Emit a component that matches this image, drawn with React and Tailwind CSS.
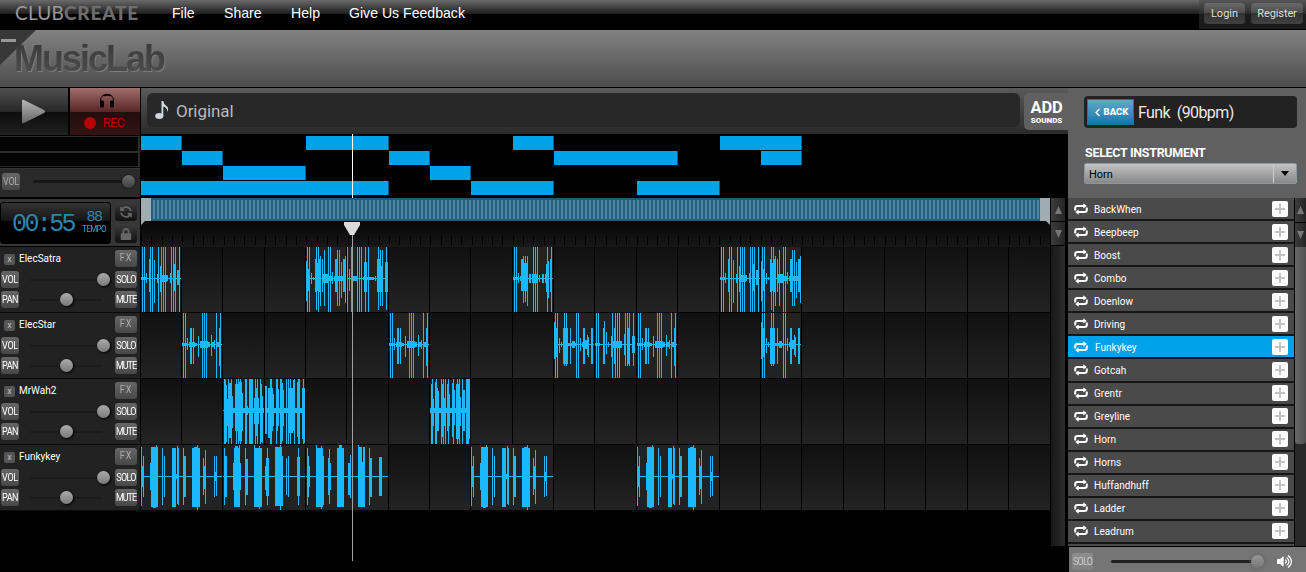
import React, { useState } from 'react';
import { FaLock, FaSyncAlt, FaVolumeUp, FaChevronLeft } from 'react-icons/fa';

// Full height bars, one pixel wide each
const full = (...xs) => xs.map((x) => [x, 1, 31, 33]);

// Each bar is [x, width, height above the axis, height below the axis]
const waves = {
  a: [...full(1, 3, 9, 11, 17, 20, 22, 24, 30, 32, 34, 38), [0, 5, 1, 1], [5, 1, 5, 4], [8, 2, 19, 13], [13, 1, 18, 24], [16, 2, 4, 4], [19, 1, 12, 13], [21, 5, 3, 3], [26, 1, 3, 2], [29, 1, 5, 4], [32, 3, 14, 12], [36, 2, 8, 6]],
  b: [...full(1, 3, 12, 22, 24), [0, 1, 17, 22], [2, 1, 9, 12], [5, 1, 5, 5], [7, 1, 1, 1], [9, 6, 15, 12], [9, 2, 19, 13], [10, 1, 31, 31], [12, 3, 19, 13], [14, 1, 22, 27], [16, 1, 19, 13], [17, 5, 4, 4], [18, 1, 28, 27], [21, 5, 2, 2], [26, 1, 6, 5], [28, 9, 2, 2], [29, 3, 19, 13], [31, 1, 28, 27], [33, 1, 28, 27], [35, 1, 16, 19], [37, 3, 19, 13], [39, 1, 22, 24]],
  c: [...full(0, 4, 10, 12, 14, 18, 21), [2, 1, 9, 12], [4, 6, 2, 2], [17, 3, 16, 13], [16, 11, 1, 1], [28, 1, 2, 2], [30, 3, 19, 13], [31, 1, 31, 31], [33, 1, 28, 27], [30, 6, 12, 13], [35, 1, 28, 27], [38, 3, 16, 13], [39, 1, 31, 31]],
  d: [...full(1, 3, 20, 22, 24, 34, 38), [0, 5, 1, 1], [5, 1, 5, 4], [7, 2, 2, 2], [8, 2, 19, 12], [8, 7, 15, 12], [10, 1, 22, 24], [12, 1, 22, 23], [14, 1, 22, 27], [16, 2, 4, 4], [19, 6, 4, 4], [26, 1, 3, 3], [29, 2, 4, 4], [32, 3, 4, 4], [33, 2, 14, 13], [35, 1, 17, 19], [37, 1, 19, 13]],
  e: [...full(1, 3, 20, 22, 24, 34, 38), [0, 5, 1, 1], [5, 1, 6, 5], [7, 6, 2, 2], [8, 2, 16, 19], [11, 1, 16, 19], [13, 2, 1, 1], [16, 1, 8, 12], [18, 8, 3, 3], [26, 2, 2, 2], [29, 1, 9, 11], [30, 2, 2, 2], [32, 1, 4, 4], [35, 4, 2, 2], [37, 1, 16, 21]],
  f: [...full(1, 3, 22, 24), [0, 4, 16, 12], [0, 1, 22, 14], [5, 1, 6, 8], [7, 1, 2, 2], [9, 5, 16, 19], [10, 1, 31, 21], [12, 1, 31, 21], [14, 8, 1, 1], [16, 1, 16, 19], [18, 3, 3, 3], [26, 1, 6, 6], [28, 7, 2, 2], [29, 2, 16, 19], [31, 2, 4, 4], [33, 1, 9, 10], [34, 1, 7, 12], [37, 2, 16, 19], [40, 1, 16, 19]],
  g: [...full(1, 3, 17, 20, 22, 24), [0, 5, 1, 1], [8, 1, 16, 19], [9, 1, 23, 19], [11, 1, 12, 9], [13, 1, 2, 2], [16, 2, 8, 12], [19, 1, 16, 19], [17, 10, 3, 3], [29, 1, 10, 10], [30, 1, 31, 21], [32, 1, 31, 21], [32, 3, 16, 19], [34, 1, 31, 21], [37, 2, 2, 2], [38, 1, 31, 21], [37, 3, 8, 8]],
  h: [...full(1, 2, 5, 8, 13, 15, 17, 22, 23, 26, 27, 28, 29, 32, 34, 37), [1, 40, 2, 2], [3, 1, 25, 31], [4, 1, 11, 15], [5, 4, 27, 27], [8, 1, 27, 27], [9, 1, 14, 17], [12, 3, 26, 20], [15, 4, 28, 30], [19, 1, 17, 20], [24, 1, 4, 4], [31, 1, 12, 13], [33, 1, 22, 25], [35, 1, 12, 13], [37, 2, 26, 31], [39, 1, 14, 32]],
  i: [...full(5, 6, 11, 15, 16, 21, 23, 25, 29, 33, 34, 38), [0, 40, 2, 2], [0, 2, 24, 23], [3, 3, 22, 27], [7, 1, 22, 20], [8, 1, 16, 15], [11, 2, 31, 20], [13, 1, 21, 15], [15, 3, 27, 30], [18, 1, 20, 15], [24, 4, 22, 22], [28, 2, 30, 20], [32, 3, 28, 26], [37, 3, 22, 28], [39, 1, 16, 32]],
  k: [...full(2, 6, 11, 13, 15, 18, 23, 27, 29, 32, 36, 37, 38), [0, 40, 2, 2], [1, 2, 26, 33], [3, 1, 11, 15], [5, 2, 28, 33], [7, 1, 22, 20], [8, 1, 19, 20], [12, 1, 26, 26], [14, 1, 12, 15], [17, 2, 26, 20], [19, 1, 16, 15], [22, 2, 27, 26], [24, 1, 20, 14], [26, 4, 26, 28], [30, 1, 13, 15], [33, 2, 20, 20], [36, 5, 31, 28]],
  j1: [[0, 82, 0, 0], [0, 1, 29, 29], [1, 1, 10, 10], [2, 1, 20, 20], [9, 1, 13, 13], [10, 7, 29, 30], [12, 3, 28, 31], [15, 1, 32, 30], [21, 1, 28, 28], [23, 1, 20, 20], [31, 4, 28, 30], [34, 3, 2, 2], [36, 1, 30, 27], [37, 1, 28, 28], [42, 1, 28, 28], [43, 2, 20, 20], [51, 8, 28, 30], [53, 3, 29, 28], [56, 1, 31, 33], [62, 1, 18, 18], [63, 1, 10, 12], [64, 1, 26, 27], [73, 1, 20, 20], [74, 1, 4, 4], [75, 1, 20, 19]],
  j2: [[0, 82, 0, 0], [1, 1, 28, 28], [2, 2, 20, 20], [10, 8, 13, 13], [11, 6, 28, 30], [12, 3, 30, 30], [16, 1, 32, 28], [22, 1, 28, 28], [23, 2, 17, 18], [31, 8, 28, 30], [31, 1, 32, 30], [36, 1, 30, 32], [42, 4, 10, 13], [43, 3, 18, 19], [44, 1, 28, 28], [52, 7, 29, 29], [52, 8, 20, 29], [57, 1, 31, 33], [63, 1, 18, 18], [65, 1, 20, 20], [74, 3, 19, 19], [75, 1, 28, 28]],
  j3: [[0, 82, 0, 0], [1, 1, 28, 28], [2, 1, 20, 20], [3, 1, 10, 10], [10, 8, 20, 28], [10, 7, 28, 30], [10, 1, 32, 30], [15, 1, 30, 32], [22, 1, 18, 18], [23, 1, 27, 27], [24, 1, 13, 13], [31, 7, 28, 30], [33, 3, 31, 30], [42, 2, 13, 18], [44, 1, 21, 21], [52, 4, 29, 30], [52, 1, 32, 30], [56, 3, 14, 30], [57, 2, 29, 28], [63, 1, 28, 28], [64, 2, 18, 20], [73, 3, 19, 19]],
};

// Clips by start column
const tracks = [
  { name: 'ElecSatra', clips: { 0: 'a', 4: 'b', 5: 'c', 9: 'd', 14: 'a', 15: 'b' } },
  { name: 'ElecStar', clips: { 1: 'e', 6: 'e', 10: 'f', 11: 'g', 12: 'e', 15: 'f' } },
  { name: 'MrWah2', clips: { 2: 'h', 3: 'i', 7: 'k' } },
  { name: 'Funkykey', span: 2, clips: { 0: 'j1', 2: 'j2', 4: 'j3', 8: 'j1', 12: 'j1' } },
];

// Overview bars as [start column, length]
const overview = [
  [[0, 1], [4, 2], [9, 1], [14, 2]],
  [[1, 1], [6, 1], [10, 3], [15, 1]],
  [[2, 2], [7, 1]],
  [[0, 6], [8, 2], [12, 2]],
];

const sounds = [
  'BackWhen', 'Beepbeep', 'Boost', 'Combo', 'Doenlow', 'Driving', 'Funkykey', 'Gotcah',
  'Grentr', 'Greyline', 'Horn', 'Horns', 'Huffandhuff', 'Ladder', 'Leadrum',
];

const Wave = ({ name, width }) => (
  <svg width={width} height="65" className="block" shapeRendering="crispEdges" fill="#1cb8fc">
    <rect x="0" y="31" width={width - 1} height="1" />
    {waves[name].map(([x, w, up, down], i) => (
      <rect key={i} x={x} y={31 - up} width={w} height={up + down + 1} />
    ))}
  </svg>
);

const LoopIcon = () => (
  <svg width="14" height="12" viewBox="0 0 14 12" fill="none" stroke="#fff" strokeWidth="2">
    <path d="M1.2 7.5V5.2Q1.2 3 3.4 3H10" />
    <path d="M12.8 4.5V6.8Q12.8 9 10.6 9H4" />
    <path d="M9.3 .2L12.8 3L9.3 5.6ZM4.7 6.4L1.2 9L4.7 11.8Z" fill="#fff" stroke="none" />
  </svg>
);

const HeadphonesIcon = () => (
  <svg width="16" height="15" viewBox="0 0 16 15">
    <path d="M2 9C.5 4 4 1.500 8 1.500s7.500 2.500 6 7.500" fill="none" stroke="#000" strokeWidth="1" />
    <path d="M4 2.300Q8-1 12 2.300L11.300 3.600Q8 1.800 4.700 3.600Z" />
    <rect x="1" y="7.500" width="4" height="7" rx="1.500" />
    <rect x="11" y="7.500" width="4" height="7" rx="1.500" />
  </svg>
);

const PixelButton = ({ children, className = '' }) => (
  <button className={`flex h-[17px] items-center justify-center rounded-[3px] bg-linear-to-b from-[#666] to-[#484848] text-[9px] leading-none text-white ${className}`}>
    <span className="inline-block scale-y-115 pt-px">{children}</span>
  </button>
);

const Slider = ({ position }) => (
  <div className="relative h-[2px] w-[72px] bg-[#1b1b1b]">
    <div
      className="absolute -top-[6px] size-[13px] rounded-full bg-linear-to-b from-[#ababab] to-[#7a7a7a] shadow-[1px_1px_3px_#000]"
      style={{ left: position }}
    />
  </div>
);

const TrackControls = ({ name }) => (
  <div className="h-[66px] border-b border-[#0b0b0b] bg-[#222] pt-[2px]">
    <div className="flex h-[18px] items-center pl-1 pr-[3px]">
      <span className="mt-[2px] flex size-[11px] items-center justify-center rounded-[2px] bg-[#555] text-[9px] leading-none text-[#bbb]">x</span>
      <span className="ml-[4px] flex-1 pt-[2px] text-[10px] leading-none text-white">{name}</span>
      <PixelButton className="w-[22px] tracking-[1px] !text-[#aaa]">FX</PixelButton>
    </div>
    <div className="mt-1 flex items-center pl-px pr-[3px]">
      <PixelButton className="w-[18px]"><span className="tracking-[-.3px]">VOL</span></PixelButton>
      <div className="ml-[11px] flex-1"><Slider position={67} /></div>
      <PixelButton className="w-[22px]"><span className="tracking-[-.7px]">SOLO</span></PixelButton>
    </div>
    <div className="mt-[3px] flex items-center pl-px pr-[3px]">
      <PixelButton className="w-[18px]"><span className="tracking-[-.5px]">PAN</span></PixelButton>
      <div className="ml-[11px] flex-1"><Slider position={30} /></div>
      <PixelButton className="w-[22px]"><span className="tracking-[-1px]">MUTE</span></PixelButton>
    </div>
  </div>
);

const TrackLane = ({ clips, span = 1 }) => {
  const cells = [];
  for (let col = 0; col < 22; col += clips[col] ? span : 1) {
    const clip = clips[col];
    cells.push(
      <div
        key={col}
        className={`border-l border-black ${clip && span === 2 ? 'col-span-2' : ''} ${clip ? 'bg-[#222]' : 'bg-linear-to-b from-[#111] to-[#232323]'}`}
      >
        {clip && <Wave name={clip} width={span === 2 ? 82 : 41} />}
      </div>
    );
  }
  return (
    <div className="ml-[-0.3px] grid h-[66px] grid-cols-[repeat(21,41.350px)_1fr] overflow-hidden border-b border-[#050505]">
      {cells}
    </div>
  );
};

const ArrowBox = ({ up, className = '' }) => (
  <div className={`flex items-center justify-center bg-linear-to-r from-[#3c3c3c] to-[#252525] ${className}`}>
    <svg width="7" height="8" viewBox="0 0 7 8" fill="#777">
      <path d={up ? 'M3.5 0L7 8H0Z' : 'M0 0H7L3.500 8Z'} />
    </svg>
  </div>
);

const Header = () => (
  <>
    <div className="flex h-[30px] bg-[linear-gradient(#6a6a6a_0,#1c1c1c_14px,#000_14px)]">
      <div className="w-[172px] whitespace-nowrap pl-[15px] pt-[3px] font-['Lato'] text-[19px] leading-[20px] text-[#999]">
        <span className="tracking-[.2px]">CLUB</span>
        <span className="font-black tracking-[.8px] text-[#6e6e6e]">CREATE</span>
      </div>
      <nav className="flex flex-1 font-['Liberation_Sans'] text-[14.100px] leading-[27px] text-white">
        <span className="w-[52px]">File</span>
        <span className="w-[67px]">Share</span>
        <span className="w-[58px]">Help</span>
        <span>Give Us Feedback</span>
      </nav>
      <div className="flex h-[29px] w-[107px] gap-[6px] bg-[linear-gradient(#555_0,#2a2a2a_14px,#1b1b1b_14px)] pl-[5px] pt-[3px] text-[11px] text-[#ddd]">
        <button className="h-[21px] w-[41px] rounded-[4px] bg-[linear-gradient(#6b6b6b,#4b4b4b_50%,#333_50%,#414141)] pt-px">Login</button>
        <button className="h-[21px] w-[52px] rounded-[4px] bg-[linear-gradient(#6b6b6b,#4b4b4b_50%,#333_50%,#414141)] pt-px tracking-[-.1px]">Register</button>
      </div>
    </div>
    <div className="relative h-[58px] border-b border-black bg-linear-to-b from-[#828282] to-[#4d4d4d]">
      <svg className="absolute left-0 top-0" width="37" height="35">
        <path d="M0 0H36L0 35Z" fill="#383838" />
        <rect x="1" y="9" width="15" height="3" fill="#999" />
      </svg>
      <h1 className="absolute left-[14px] top-[9px] pr-1 bg-linear-to-b from-[#383838] to-[#505050] bg-clip-text font-['Liberation_Sans'] text-[36px] font-bold leading-[40px] tracking-[-2px] text-transparent drop-shadow-[1px_1px_0_#7b7b7b]">
        MusicLab
      </h1>
    </div>
  </>
);

const LeftPanel = () => (
  <aside className="w-[140px] bg-black">
    <div className="flex h-[47px] gap-[2px]">
      <button className="flex w-[68px] items-center justify-center bg-[linear-gradient(#505050,#272727_50%,#0c0c0c_50%,#202020)]">
        <svg width="26" height="26" viewBox="0 0 26 26">
          <defs>
            <linearGradient id="play" x2="0" y2="1">
              <stop stopColor="#b5b5b5" />
              <stop offset="1" stopColor="#666" />
            </linearGradient>
          </defs>
          <path d="M1 2Q1 0 3 1L23 11Q25 12.500 23 14L3 24Q1 25 1 23Z" fill="url(#play)" />
        </svg>
      </button>
      <button className="flex flex-1 flex-col items-center bg-[linear-gradient(#a16e6e,#5a2626_50%,#220c0c_50%,#351313)] pt-[5px]">
        <span className="ml-1"><HeadphonesIcon /></span>
        <span className="mt-[8px] flex items-center gap-[7px] pr-[2px] text-[13px] leading-[14px] text-[#b80000]">
          <span className="size-[12px] rounded-full bg-[#b50505]" />
          <span className="tracking-[-.8px]">REC</span>
        </span>
      </button>
    </div>
    <div className="mt-px flex h-[31px] flex-col gap-[2px] border-r-2 border-[#2c2c2c] bg-[#2c2c2c] pt-px">
      <div className="h-[14px] bg-[#050505]" />
      <div className="h-[13px] bg-[#050505]" />
    </div>
    <div className="mt-px flex h-[29px] items-center border-t border-[#333] bg-[#2a2a2a] pl-[2px]">
      <PixelButton className="-mt-[3px] w-[18px] !text-[#aaa]"><span className="tracking-[-.3px]">VOL</span></PixelButton>
      <div className="relative -mt-[4px] ml-[13px] h-[3px] w-[96px] rounded bg-[#171717]">
        <div className="absolute -top-[5px] left-[89px] size-[13px] rounded-full bg-linear-to-b from-[#6e6e6e] to-[#404040] shadow-[0_0_2px_#000]" />
      </div>
    </div>
    <div className="mt-[2px] flex h-[47px] gap-[4px] bg-[#363636] pr-[3px] pt-[3px]">
      <div className="flex h-[42px] w-[111px] rounded-[3px] border border-black bg-[linear-gradient(#333,#151515_18px,#000_18px)] text-[#2b86ae]">
        <div className="w-[81px] whitespace-nowrap pl-[11px] pt-[12px] font-['Liberation_Mono'] text-[25px] leading-[20px] tracking-[-2.600px]">00:55</div>
        <div className="w-[24px] pt-[9px] text-center">
          <div className="font-['Liberation_Mono'] text-[15px] leading-[12px] tracking-[-1.500px]">88</div>
          <div className="mt-[2px] scale-y-115 text-[8px] leading-[8px] tracking-[-.6px] text-[#3fa5d0]">TEMPO</div>
        </div>
      </div>
      <div className="flex flex-col gap-[3px] text-[#666]">
        <div className="flex h-[19px] w-[22px] items-center justify-center rounded-[3px] bg-linear-to-b from-[#3c3c3c] to-[#111]"><FaSyncAlt size={12} className="-scale-x-100" /></div>
        <div className="flex h-[19px] w-[22px] items-center justify-center rounded-[3px] bg-linear-to-b from-[#3c3c3c] to-[#111]"><FaLock size={12} /></div>
      </div>
    </div>
    <div className="pt-px">
      {tracks.map((track) => <TrackControls key={track.name} name={track.name} />)}
    </div>
  </aside>
);

const Timeline = () => (
  <main className="relative w-[929px] bg-black">
    <div className="ml-px flex h-[46px] bg-linear-to-b from-[#5a5a5a] to-[#2a2a2a] pl-[6px] pt-[5px]">
      <div className="flex h-[34px] w-[873px] items-center rounded-[6px] bg-[#282828] pl-[8px] text-[17px] tracking-[-.05px] text-[#b9b9b9]">
        <svg className="mr-[7px]" width="14" height="20" viewBox="0 0 14 20" fill="#ced8df">
          <ellipse cx="4.300" cy="16" rx="4.100" ry="2.900" />
          <path d="M6.500 1H8.300Q8.800 4.500 11.500 6T12.500 12Q12.300 7.500 8.300 6.500V16H6.500Z" />
        </svg>
        <span className="pt-[3px]">Original</span>
      </div>
      <button className="ml-[4px] h-[37px] w-[45px] self-start rounded-l-[5px] bg-[#606060] text-center font-bold text-white">
        <span className="block text-[16.500px] leading-[18px] tracking-[-.2px]">ADD</span>
        <span className="block text-[8px] leading-[7px] font-black">SOUNDS</span>
      </button>
    </div>
    <div className="mt-[2px] flex h-[62px] flex-col gap-px">
      {overview.map((bars, row) => (
        <div key={row} className="ml-[-0.3px] grid h-[14px] grid-cols-[repeat(22,41.350px)]">
          {bars.map(([start, length]) => (
            <div
              key={start}
              className="row-start-1 ml-px -mr-px border-r border-[#005f8c] bg-[#00a2ea]"
              style={{ gridColumn: `${start + 1} / span ${length}` }}
            />
          ))}
        </div>
      ))}
    </div>
    <div className="flex">
      <div className="w-[910px]">
        <div className="ml-px flex h-[23px] bg-[#1d5d79]">
          <div className="w-[10px] bg-[#9fadb3]" />
          <div className="my-[2px] flex-1 bg-[repeating-linear-gradient(90deg,#245f79_0,#245f79_2px,#4b87a2_2px,#4b87a2_4px)]" />
          <div className="w-[10px] bg-[#9fadb3]" />
        </div>
        <div className="relative ml-px flex h-[26px] items-end overflow-hidden bg-linear-to-b from-[#070707] to-[#181818] pb-[2px]">
          {Array.from({ length: 89 }, (_, i) => (
            <div key={i} className="h-[9px] w-[10.333px] shrink-0 border-l border-black" />
          ))}
          <svg className="absolute left-0 top-0" width="4" height="4" fill="#9fadb3"><path d="M0 0H4L0 4Z" /></svg>
          <svg className="absolute right-0 top-0" width="4" height="4" fill="#9fadb3"><path d="M0 0H4V4Z" /></svg>
        </div>
        {tracks.map((track) => <TrackLane key={track.name} clips={track.clips} span={track.span} />)}
      </div>
      <div className="ml-px flex h-[348px] w-[14px] flex-col bg-linear-to-r from-[#181818] to-[#2d2d2d]">
        <ArrowBox up className="h-[24px] border-b border-black" />
        <ArrowBox className="h-[24px] border-b border-black" />
      </div>
    </div>
    <div className="absolute left-[212px] top-[46px] h-[64px] w-px bg-white" />
    <div className="absolute left-[212px] top-[147px] h-[326px] w-px bg-[#a0a0a0]" />
    <svg className="absolute left-[204px] top-[134px]" width="17" height="14">
      <path d="M0 0H16V3L10 13H6L0 3Z" fill="#dcdcdc" />
    </svg>
  </main>
);

const SoundLibrary = () => {
  const [selected, setSelected] = useState('Funkykey');

  return (
    <aside className="flex w-[237px] flex-col bg-black">
      <div className="relative -ml-px h-[110px] bg-[#606060] pl-[16px] pt-[8px]">
        <div className="flex h-[32px] w-[213px] items-center rounded-[4px] bg-[#222] pl-[3px]">
          <button className="flex h-[26px] w-[47px] items-center justify-center gap-[2px] border border-[#1676a1] bg-linear-to-b from-[#61a8c9] to-[#0878ab] pt-px text-[9.500px] font-black text-white">
            <FaChevronLeft size={9} />
            BACK
          </button>
          <span className="ml-[4px] whitespace-pre pt-[2px] text-[16px] tracking-[-.6px] text-[#e8e8e8]">Funk  (90bpm)</span>
        </div>
        <div className="mt-[18px] pl-px text-[12.500px] font-bold leading-[14px] text-white tracking-[-.3px]">SELECT INSTRUMENT</div>
        <div className="mt-[3px] flex h-[21px] w-[213px] items-center rounded-[2px] border border-[#8b979c] bg-linear-to-b from-[#c4c4c4] to-[#888] pl-[4px] text-[11px] text-black">
          <span className="flex-1 pt-[3px]">Horn</span>
          <span className="flex h-full w-[23px] items-center justify-center border-l border-[#ccc]">
            <svg width="8" height="5"><path d="M0 0H8L4 5Z" /></svg>
          </span>
        </div>
      </div>
      <div className="relative -ml-px flex h-[348px] overflow-hidden">
        <div className="w-[226px]">
          {sounds.map((sound) => (
            <div
              key={sound}
              onClick={() => setSelected(sound)}
              className={`flex h-[23.070px] items-center border-b-2 border-[#161616] pl-[6px] pr-[6px] text-[10px] text-white ${sound === selected ? 'bg-[#00a2ea]' : 'bg-[#4a4a4a]'}`}
            >
              <LoopIcon />
              <span className={`flex-1 pt-px tracking-[.05px] ${sound === selected ? 'ml-[7px]' : 'ml-[6px]'}`}>{sound}</span>
              <span className="flex size-4 items-center justify-center rounded-[2px] bg-white">
                <svg width="10" height="10" fill="#c4c4c4"><path d="M4 0H6V4H10V6H6V10H4V6H0V4H4Z" /></svg>
              </span>
            </div>
          ))}
          <div className="h-[3px] bg-[#4a4a4a]" />
        </div>
        <div className="ml-px flex w-[11px] flex-col bg-[#292929]">
          <ArrowBox up className="h-[25px] border-b border-black" />
          <ArrowBox className="h-[24px]" />
          <div className="h-[197px] rounded-b-[3px] bg-linear-to-r from-[#696969] to-[#505050]" />
        </div>
      </div>
      <div className="mt-px flex h-[25px] items-center bg-[#757575] pl-[3px] pt-[4px]">
        <PixelButton className="w-[21px] !from-[#8e8e8e] !to-[#808080] !text-[#ccc]"><span className="tracking-[-.8px]">SOLO</span></PixelButton>
        <div className="relative ml-[18px] h-[3px] w-[151px] rounded bg-[#202020]">
          <div className="absolute -top-[5px] left-[140px] size-[13px] rounded-full bg-linear-to-b from-[#969696] to-[#777] shadow-[0_0_4px_#555]" />
        </div>
        <FaVolumeUp className="ml-[15px] text-white" size={15} />
      </div>
    </aside>
  );
};

export default function App() {
  return (
    <div className="h-[572px] w-[1306px] overflow-hidden bg-black font-['Roboto',sans-serif]">
      <Header />
      <div className="flex h-[484px]">
        <LeftPanel />
        <Timeline />
        <SoundLibrary />
      </div>
    </div>
  );
}
